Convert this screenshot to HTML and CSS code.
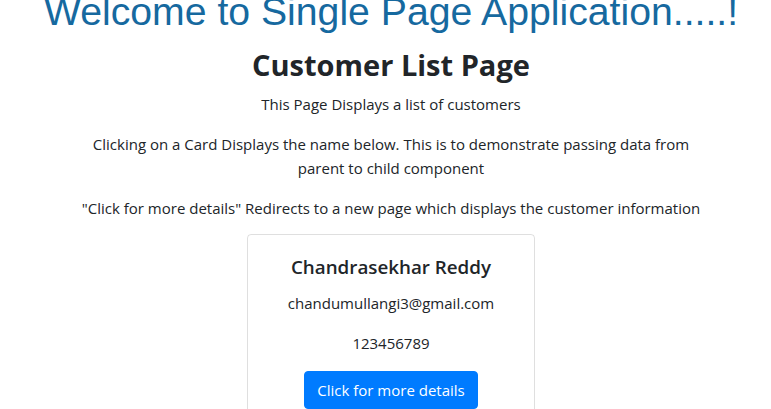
FILE: index.html
```html
<!DOCTYPE html>
<html lang="en">
<head>
<meta charset="utf-8">
<title>Single Page Application</title>
<link rel="stylesheet" href="styles.css">
</head>
<body>
  <div class="app">
    <h1 class="welcome">Welcome to Single Page Application.....!</h1>
    <main class="content">
      <h2 class="page-title">Customer List Page</h2>
      <p class="text">This Page Displays a list of customers</p>
      <p class="text">Clicking on a Card Displays the name below. This is to demonstrate passing data from parent to child component</p>
      <p class="text last">"Click for more details" Redirects to a new page which displays the customer information</p>
      <div class="card">
        <h5 class="card-title">Chandrasekhar Reddy</h5>
        <p class="card-text">chandumullangi3@gmail.com</p>
        <p class="card-text">123456789</p>
        <a class="btn" href="#">Click for more details</a>
      </div>
    </main>
  </div>
</body>
</html>
```

FILE: styles.css
```css
* { box-sizing: border-box; }
html, body { margin: 0; padding: 0; }
body {
  font-family: "Open Sans", "Noto Sans", sans-serif;
  font-size: 15px;
  line-height: 24px;
  color: #212529;
  background: #fff;
  overflow: hidden;
  height: 409px;
}
.app {
  padding-left: 11px;
  display: flex;
  flex-direction: column;
  align-items: center;
}
.welcome {
  font-family: "Liberation Sans", Arial, sans-serif;
  font-weight: 400;
  font-size: 39.2px;
  line-height: 46px;
  color: #16699f;
  margin: -11px 0 12px;
  white-space: nowrap;
}
.content {
  width: 640px;
  display: flex;
  flex-direction: column;
  align-items: center;
  text-align: center;
}
.page-title {
  font-size: 29px;
  font-weight: 700;
  line-height: 36px;
  margin: 0 0 9px;
}
.text {
  margin: 0 0 16px;
}
.text.last {
  margin-bottom: 14px;
}
.card {
  width: 288px;
  border: 1px solid rgba(0,0,0,.125);
  border-radius: 4px;
  padding: 20px;
  display: flex;
  flex-direction: column;
  align-items: center;
}
.card-title {
  font-size: 18.8px;
  font-weight: 600;
  line-height: 24px;
  margin: 0 0 12px;
}
.card-text {
  margin: 0 0 16px;
}
.btn {
  display: inline-block;
  background: #007bff;
  border: 1px solid #007bff;
  color: #fff;
  text-decoration: none;
  padding: 6px 12px;
  border-radius: 4px;
  line-height: 24px;
  font-size: 15px;
}
```
